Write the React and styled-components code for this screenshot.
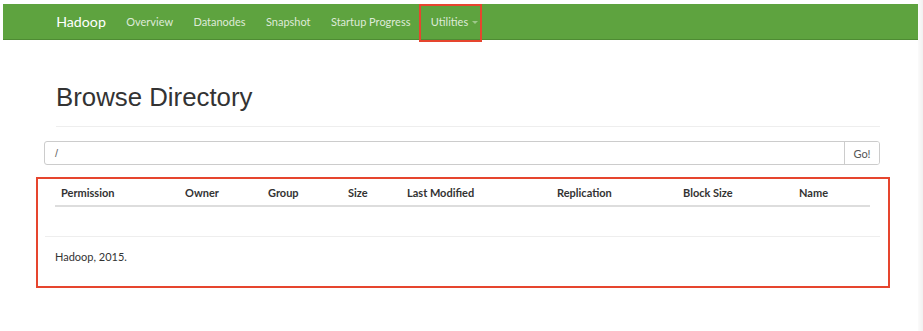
import React from "react";
import styled, { createGlobalStyle } from "styled-components";

const GlobalStyle = createGlobalStyle`
  html, body {
    margin: 0;
    background: #fff;
  }
  * { box-sizing: border-box; }
`;

const Page = styled.div`
  display: grid;
  grid-template-columns: 1fr 5px;
  min-height: 331px;
  width: 923px;
`;

const Main = styled.div`
  padding: 4px 0 0 3px;
`;

const EdgeStrip = styled.div`
  background: linear-gradient(90deg, #fbfbfb, #f1f1f1);
`;

/* green top bar */
const Navbar = styled.nav`
  height: 36px;
  background: #5ea33f;
  border-bottom: 1px solid #4e8b33;
  display: flex;
  align-items: stretch;
  padding-left: 43px;
`;

const NavItem = styled.a`
  position: relative;
  display: flex;
  align-items: center;
  gap: 4px;
  padding: 0 10.2px;
  font-family: Lato, "Liberation Sans", sans-serif;
  font-size: ${(p) => (p.brand ? "14.2px" : "11px")};
  color: ${(p) => (p.brand ? "#ffffff" : "rgba(255,255,255,0.8)")};
  text-decoration: none;
  white-space: nowrap;

  ${(p) =>
    p.marked &&
    `
    &::after {
      content: "";
      position: absolute;
      top: 0;
      bottom: -3px;
      left: -2px;
      right: 6px;
      border: 2px solid #e6452e;
    }
  `}
`;

const Caret = styled.span`
  width: 0;
  height: 0;
  border-left: 3px solid transparent;
  border-right: 3px solid transparent;
  border-top: 3px solid rgba(255, 255, 255, 0.4);
  margin-top: 1px;
`;

const Content = styled.div`
  padding: 0 28px 0 33px;
`;

const Header = styled.div`
  margin: 42px 10px 0 20px;
  padding-bottom: 14px;
  border-bottom: 1px solid #eeeeee;
`;

const Title = styled.h1`
  margin: 0;
  font-family: "Liberation Sans", Arial, sans-serif;
  font-weight: 400;
  font-size: 25.8px;
  line-height: 30px;
  color: #333;
`;

const InputGroup = styled.div`
  margin: 14px 10px 0 8px;
  height: 24px;
  display: flex;
  border: 1px solid #cccccc;
  border-radius: 3px;
  overflow: hidden;
`;

const PathInput = styled.div`
  flex: 1;
  display: flex;
  align-items: center;
  padding-left: 10px;
  font-family: "Liberation Sans", Arial, sans-serif;
  font-size: 11px;
  color: #666;
`;

const GoButton = styled.button`
  width: 35px;
  border: none;
  border-left: 1px solid #cccccc;
  background: #fff;
  font-family: Lato, "Liberation Sans", sans-serif;
  font-size: 11px;
  color: #555;
  padding: 0;
`;

const Annotated = styled.section`
  margin-top: 12px;
  height: 111px;
  border: 2px solid #e6452e;
  display: flex;
  flex-direction: column;
`;

const HeadRow = styled.div`
  margin: 0 18px 0 17px;
  height: 28px;
  display: grid;
  grid-template-columns: 124px 83px 80px 59px 150px 126px 116px 1fr;
  align-items: center;
  border-bottom: 2px solid #dddddd;
`;

const HeadCell = styled.div`
  padding-left: 6px;
  font-family: Lato, "Liberation Sans", sans-serif;
  font-weight: 700;
  font-size: 11px;
  color: #333;
`;

const Footer = styled.footer`
  margin: 29px 8px 0 7px;
  border-top: 1px solid #eeeeee;
  padding: 12px 0 0 10px;
  font-family: Lato, "Liberation Sans", sans-serif;
  font-size: 11px;
  line-height: 16px;
  color: #333;
`;

const navLinks = ["Overview", "Datanodes", "Snapshot", "Startup Progress"];
const columns = [
  "Permission",
  "Owner",
  "Group",
  "Size",
  "Last Modified",
  "Replication",
  "Block Size",
  "Name",
];

export default function App() {
  return (
    <>
      <GlobalStyle />
      <Page>
        <Main>
          <Navbar>
            <NavItem brand>Hadoop</NavItem>
            {navLinks.map((l) => (
              <NavItem key={l}>{l}</NavItem>
            ))}
            <NavItem marked>
              Utilities
              <Caret />
            </NavItem>
          </Navbar>

          <Content>
            <Header>
              <Title>Browse Directory</Title>
            </Header>

            <InputGroup>
              <PathInput>/</PathInput>
              <GoButton>Go!</GoButton>
            </InputGroup>

            <Annotated>
              <HeadRow>
                {columns.map((c) => (
                  <HeadCell key={c}>{c}</HeadCell>
                ))}
              </HeadRow>
              <Footer>Hadoop, 2015.</Footer>
            </Annotated>
          </Content>
        </Main>
        <EdgeStrip />
      </Page>
    </>
  );
}
